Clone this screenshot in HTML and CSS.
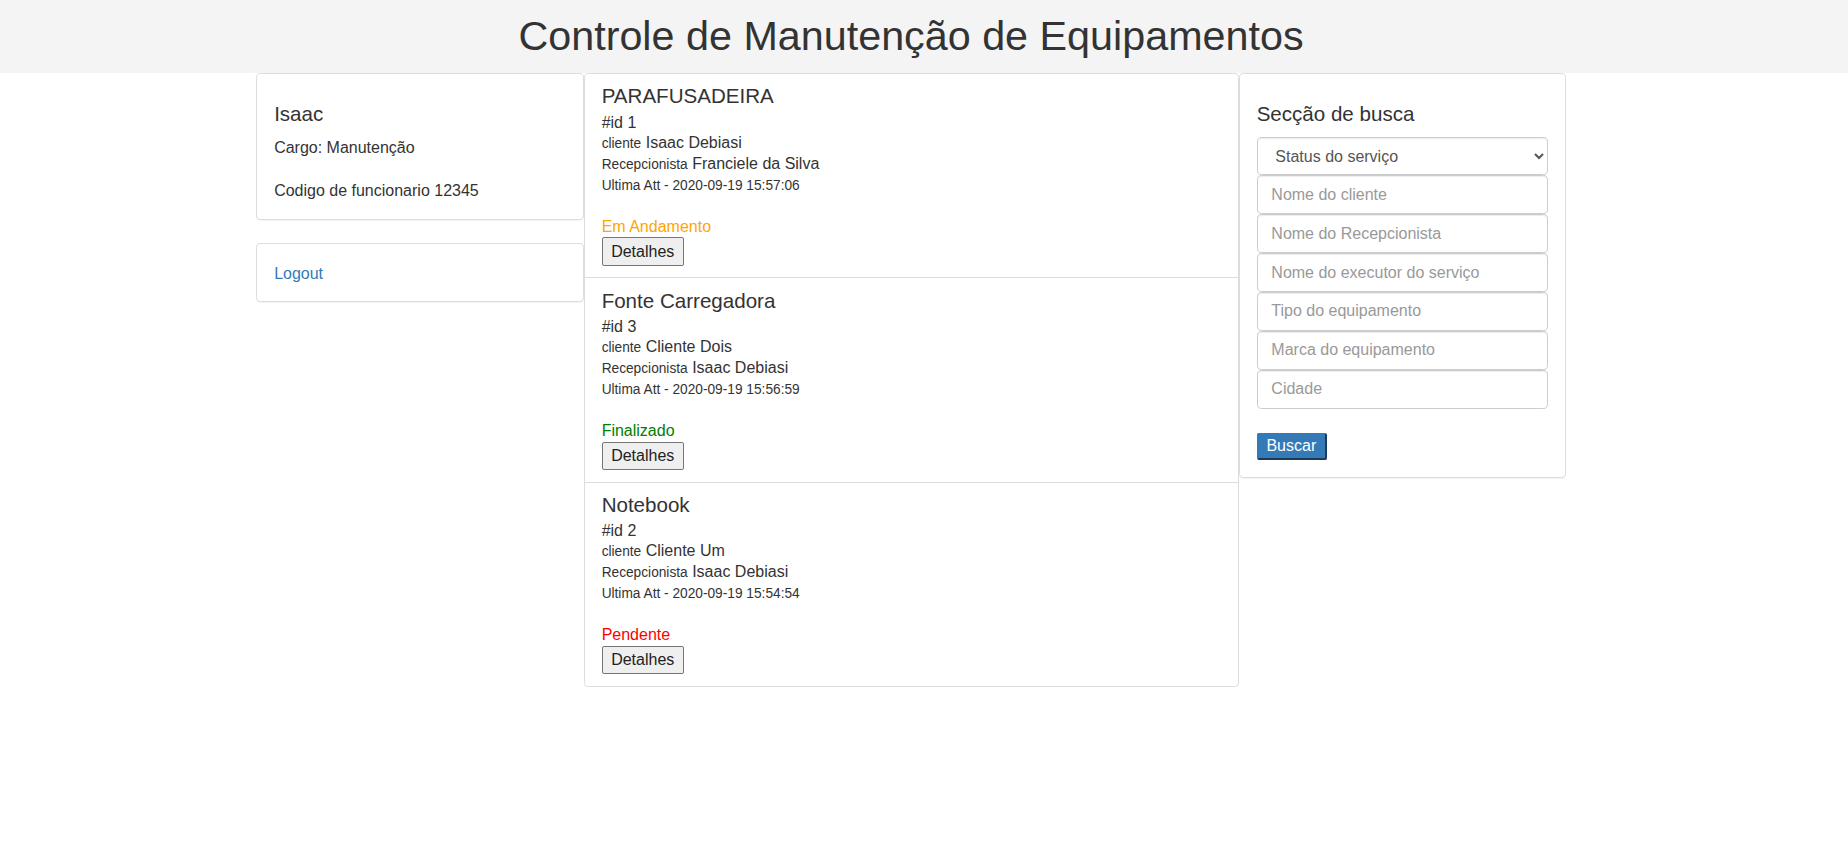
FILE: index.html
```html
<!DOCTYPE html>
<html lang="pt-BR">
<head>
<meta charset="utf-8">
<title>Controle de Manutenção de Equipamentos</title>
<link rel="stylesheet" href="styles.css">
</head>
<body>
<header class="top">
  <h1 class="title">Controle de Manutenção de Equipamentos</h1>
</header>
<div class="wrap">
  <main class="layout">
    <aside class="col-left">
      <div class="panel">
        <div class="panel-body">
          <h4 class="heading">Isaac</h4>
          <div class="info">Cargo: Manutenção</div>
          <div class="info info-code">Codigo de funcionario 12345</div>
        </div>
      </div>
      <div class="panel">
        <div class="panel-body panel-body-link">
          <a class="link" href="#">Logout</a>
        </div>
      </div>
    </aside>

    <section class="list">
      <div class="item">
        <h4 class="item-title">PARAFUSADEIRA</h4>
        <div class="line">#id 1</div>
        <div class="line"><span class="sm">cliente</span> Isaac Debiasi</div>
        <div class="line"><span class="sm">Recepcionista</span> Franciele da Silva</div>
        <div class="line line-date">Ultima Att - 2020-09-19 15:57:06</div>
        <div class="status st-progress">Em Andamento</div>
        <button class="btn" type="button">Detalhes</button>
      </div>
      <div class="item">
        <h4 class="item-title">Fonte Carregadora</h4>
        <div class="line">#id 3</div>
        <div class="line"><span class="sm">cliente</span> Cliente Dois</div>
        <div class="line"><span class="sm">Recepcionista</span> Isaac Debiasi</div>
        <div class="line line-date">Ultima Att - 2020-09-19 15:56:59</div>
        <div class="status st-done">Finalizado</div>
        <button class="btn" type="button">Detalhes</button>
      </div>
      <div class="item">
        <h4 class="item-title">Notebook</h4>
        <div class="line">#id 2</div>
        <div class="line"><span class="sm">cliente</span> Cliente Um</div>
        <div class="line"><span class="sm">Recepcionista</span> Isaac Debiasi</div>
        <div class="line line-date">Ultima Att - 2020-09-19 15:54:54</div>
        <div class="status st-pending">Pendente</div>
        <button class="btn" type="button">Detalhes</button>
      </div>
    </section>

    <aside class="col-right">
      <div class="panel">
        <div class="panel-body">
          <h4 class="heading">Secção de busca</h4>
          <form class="search">
            <select class="control control-select">
              <option>Status do serviço</option>
            </select>
            <input class="control" type="text" placeholder="Nome do cliente">
            <input class="control" type="text" placeholder="Nome do Recepcionista">
            <input class="control" type="text" placeholder="Nome do executor do serviço">
            <input class="control" type="text" placeholder="Tipo do equipamento">
            <input class="control" type="text" placeholder="Marca do equipamento">
            <input class="control" type="text" placeholder="Cidade">
            <button class="btn btn-primary" type="button">Buscar</button>
          </form>
        </div>
      </div>
    </aside>
  </main>
</div>
</body>
</html>
```

FILE: styles.css
```css
* { box-sizing: border-box; }

html, body {
  margin: 0;
  padding: 0;
  background: #fff;
}

body {
  font-family: "Liberation Sans", Arial, Helvetica, sans-serif;
  font-size: 16px;
  line-height: 22.86px;
  color: #333;
}

.top {
  background: #f4f4f4;
  height: 73px;
  display: flex;
  align-items: center;
  justify-content: center;
  padding-right: 26px;
}

.title {
  margin: 0;
  font-size: 41.3px;
  line-height: 45.25px;
  font-weight: 500;
  color: #333;
}

.wrap {
  padding-right: 26px;
}

.layout {
  width: 1310px;
  margin: 0 auto;
  display: grid;
  grid-template-columns: 327.5px 655px 327.5px;
  align-items: start;
}

.panel {
  background: #fff;
  border: 1px solid #ddd;
  border-radius: 4.57px;
  box-shadow: 0 1px 1px rgba(0, 0, 0, 0.05);
  margin-bottom: 23.5px;
}

.panel-body {
  padding: 17.14px;
}

.panel-body-link {
  padding-top: 18.4px;
  padding-bottom: 15.9px;
}

.heading {
  margin: 11.43px 0;
  font-size: 20.57px;
  line-height: 22.63px;
  font-weight: 500;
}

.info-code {
  margin-top: 20.4px;
}

.panel-body .info-code {
  margin-bottom: -1px;
}

.link {
  color: #337ab7;
  text-decoration: none;
}

.list {
  border: 1px solid #ddd;
  border-radius: 4.57px;
  box-shadow: 0 1px 1px rgba(0, 0, 0, 0.05);
  background: #fff;
}

.item {
  padding: 11.43px 17.14px;
  border-bottom: 1px solid #ddd;
}

.item:last-child {
  border-bottom: none;
}

.item-title {
  margin: 0 0 4.6px;
  font-size: 20.57px;
  line-height: 22.63px;
  font-weight: 500;
}

.line {
  line-height: 20px;
}

.sm {
  font-size: 13.71px;
}

.line-date {
  font-size: 13.71px;
  line-height: 22px;
  margin-bottom: 20px;
}

.status {
  line-height: 20.8px;
}

.st-progress { color: orange; }
.st-done { color: green; }
.st-pending { color: red; }

.btn {
  display: inline-block;
  font-family: "Liberation Sans", Arial, Helvetica, sans-serif;
  font-size: 16px;
  line-height: 18px;
  height: 28.4px;
  padding: 0 8.5px;
  color: #222;
  background: #efefef;
  border: 1px solid #767676;
  border-radius: 2px;
  vertical-align: top;
}

.btn-primary {
  margin-top: 23.9px;
  height: 27px;
  padding: 0 8.8px;
  color: #fff;
  background: #337ab7;
  border-top: 1px solid #337ab7;
  border-left: 1px solid #337ab7;
  border-right: 2px solid #1b3b59;
  border-bottom: 2px solid #1b3b59;
  border-radius: 2px;
}

.search {
  display: flex;
  flex-direction: column;
  align-items: flex-start;
}

.control {
  display: block;
  width: 100%;
  height: 38.86px;
  padding: 6.86px 13.71px;
  font-family: "Liberation Sans", Arial, Helvetica, sans-serif;
  font-size: 16px;
  line-height: 22.86px;
  color: #555;
  background: #fff;
  border: 1px solid #ccc;
  border-radius: 4.57px;
  box-shadow: inset 0 1px 1px rgba(0, 0, 0, 0.075);
  margin: 0;
}

.control::placeholder {
  color: #999;
}

.control-select {
  padding-top: 0;
  padding-bottom: 0;
}
```
